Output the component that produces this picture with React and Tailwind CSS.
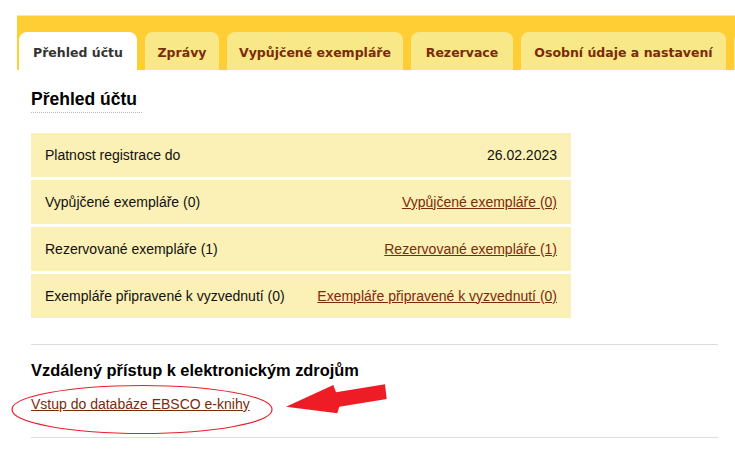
import React from "react";

const tabs = [
  { label: "Přehled účtu", w: "w-[118px]", active: true },
  { label: "Zprávy", w: "w-[74px]" },
  { label: "Vypůjčené exempláře", w: "w-[176px]" },
  { label: "Rezervace", w: "w-[102px]" },
  { label: "Osobní údaje a nastavení", w: "w-[205px]" },
  { label: "", w: "w-[60px]" },
];

const rows = [
  { left: "Platnost registrace do", right: "26.02.2023", link: false },
  { left: "Vypůjčené exempláře (0)", right: "Vypůjčené exempláře (0)", link: true },
  { left: "Rezervované exempláře (1)", right: "Rezervované exempláře (1)", link: true },
  { left: "Exempláře připravené k vyzvednutí (0)", right: "Exempláře připravené k vyzvednutí (0)", link: true },
];

export default function App() {
  return (
    <div className="relative w-[735px] h-[463px] overflow-hidden bg-white text-[#111] [font-family:'Liberation_Sans',Arial,sans-serif]">
      <div className="pt-[15px] pl-[17px]">
        <div className="flex gap-[8px] bg-[#ffcd34] pt-[16px] pl-[2px] border-t border-[#fbe9a6] overflow-hidden">
          {tabs.map((t, i) => (
            <div
              key={i}
              className={`${t.w} shrink-0 h-[38px] rounded-t-[8px] flex items-center justify-center pt-[4px] text-[12.5px] font-bold [font-family:'DejaVu_Sans',Verdana,sans-serif] whitespace-nowrap ${
                t.active ? "bg-white text-[#333]" : "bg-[#f9e887] text-[#7b2a0c]"
              }`}
            >
              {t.label}
            </div>
          ))}
        </div>
      </div>

      <div className="pl-[31px] w-[718px]">
        <div className="pt-[18px]">
          <h1 className="inline-block text-[17.5px] leading-[20px] font-bold pr-[5px] pb-[3px] border-b border-dotted border-[#bbb] text-black">
            Přehled účtu
          </h1>
        </div>

        <div className="mt-[20px] w-[540px] flex flex-col gap-[3px] text-[14px]">
          {rows.map((r, i) => (
            <div key={i} className="h-[44px] bg-[#fbf0b5] flex items-center justify-between px-[14px]">
              <span>{r.left}</span>
              {r.link ? (
                <a href="#" className="text-[#7b2a0c] underline">{r.right}</a>
              ) : (
                <span>{r.right}</span>
              )}
            </div>
          ))}
        </div>

        <div className="mt-[26px] border-t border-[#ddd] w-[687px]"></div>

        <h2 className="mt-[15px] text-[16.4px] leading-[20px] font-bold text-black">
          Vzdálený přístup k elektronickým zdrojům
        </h2>
        <div className="mt-[16px] text-[14px] leading-[16px]">
          <a href="#" className="text-[#7b2a0c] underline">Vstup do databáze EBSCO e-knihy</a>
        </div>
        <div className="mt-[25px] border-t border-[#ddd] w-[687px]"></div>
      </div>

      <svg className="absolute left-0 top-0 pointer-events-none" width="735" height="463" viewBox="0 0 735 463">
        <ellipse cx="142" cy="409.5" rx="130" ry="24" fill="none" stroke="#e8202a" strokeWidth="1.2" />
        <polygon
          points="286,406.7 333.3,385 336,392.3 385,384.3 386.7,399 339.3,406.7 337.3,413.3"
          fill="#ee1c25"
        />
      </svg>
    </div>
  );
}
